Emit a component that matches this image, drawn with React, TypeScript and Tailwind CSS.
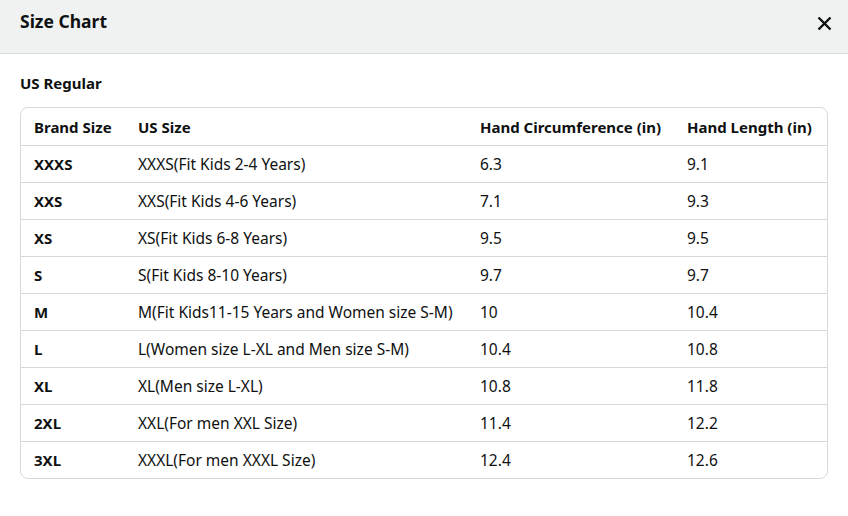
import React from 'react';

const rows: [string, string, string, string][] = [
  ['XXXS', 'XXXS(Fit Kids 2-4 Years)', '6.3', '9.1'],
  ['XXS', 'XXS(Fit Kids 4-6 Years)', '7.1', '9.3'],
  ['XS', 'XS(Fit Kids 6-8 Years)', '9.5', '9.5'],
  ['S', 'S(Fit Kids 8-10 Years)', '9.7', '9.7'],
  ['M', 'M(Fit Kids11-15 Years and Women size S-M)', '10', '10.4'],
  ['L', 'L(Women size L-XL and Men size S-M)', '10.4', '10.8'],
  ['XL', 'XL(Men size L-XL)', '10.8', '11.8'],
  ['2XL', 'XXL(For men XXL Size)', '11.4', '12.2'],
  ['3XL', 'XXXL(For men XXXL Size)', '12.4', '12.6'],
];

const cols = 'grid grid-cols-[104px_342px_207px_1fr] h-[37px] items-center leading-[20px]';

export default function App() {
  return (
    <div className="w-[848px] h-[516px] bg-white text-[#0f1111] font-['Noto_Sans',_'Open_Sans',_sans-serif]">
      <div className="h-[54px] bg-[#f0f2f2] border-b border-[#d5d9d9] flex items-start justify-between pl-5 pr-4 pt-[9px]">
        <h2 className="text-[17.5px] font-bold leading-[24px]">Size Chart</h2>
        <button className="w-[16px] h-[16px] mt-[6px] flex items-center justify-center">
          <svg width="15" height="15" viewBox="0 0 15 15" fill="none" stroke="#0f1111" strokeWidth="2.4">
            <path d="M1.5 1.5 L13.5 13.5 M13.5 1.5 L1.5 13.5" />
          </svg>
        </button>
      </div>

      <div className="px-5 pt-[19px]">
        <h3 className="text-[15px] font-bold leading-[20px]">US Regular</h3>
        <div className="mt-[14px] border border-[#d5d9d9] rounded-lg overflow-hidden text-[15.5px]">
          <div className={`${cols} font-bold text-[15px]`}>
            <div className="pl-[13px]">Brand Size</div>
            <div className="pl-[13px]">US Size</div>
            <div className="pl-[13px]">Hand Circumference (in)</div>
            <div className="pl-[13px]">Hand Length (in)</div>
          </div>
          {rows.map((r) => (
            <div key={r[0]} className={`${cols} border-t border-[#d5d9d9]`}>
              <div className="pl-[13px] font-bold text-[15px]">{r[0]}</div>
              <div className="pl-[13px]">{r[1]}</div>
              <div className="pl-[13px]">{r[2]}</div>
              <div className="pl-[13px]">{r[3]}</div>
            </div>
          ))}
        </div>
      </div>
    </div>
  );
}
